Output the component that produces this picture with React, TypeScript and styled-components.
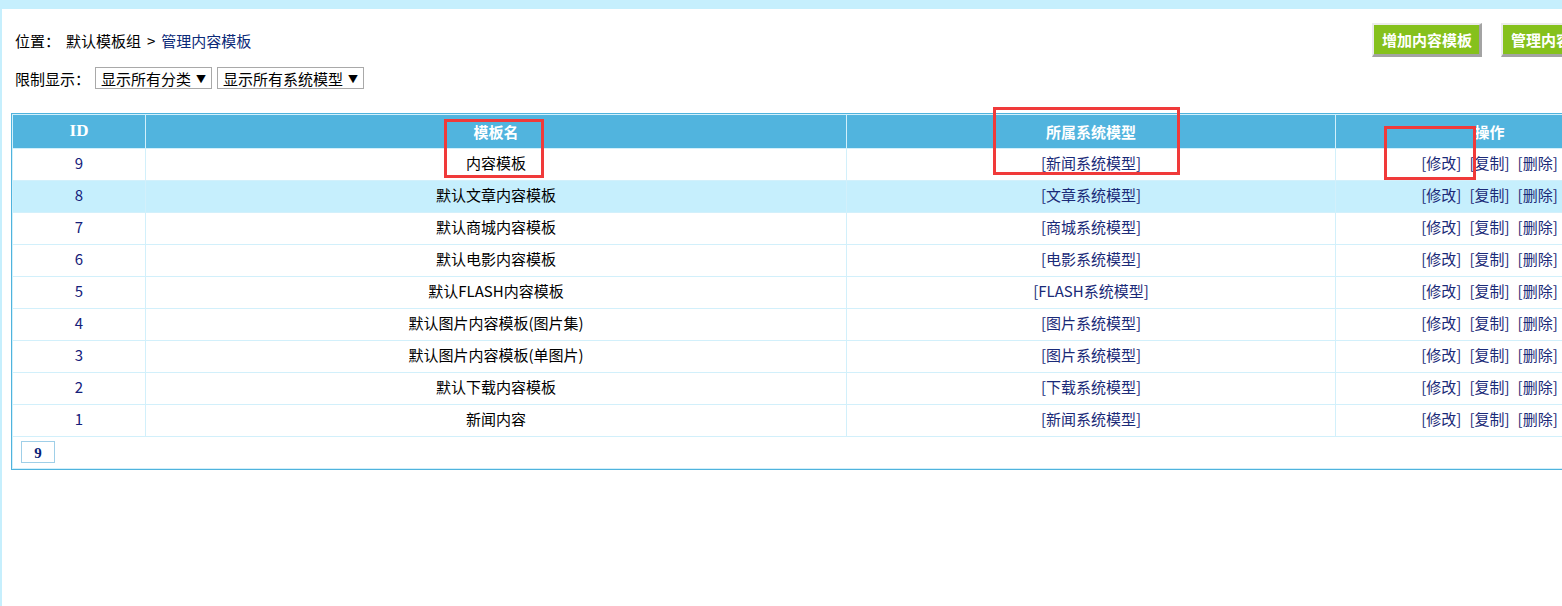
import React from 'react';
import styled, { createGlobalStyle } from 'styled-components';

const GlobalStyle = createGlobalStyle`
    html, body {
        margin: 0;
        padding: 0;
        overflow: hidden;
        background: #c6effd;
    }
    body {
        font-family: "Noto Sans CJK SC", "Liberation Sans", sans-serif;
        font-size: 15px;
        color: #000;
    }
`;

interface TemplateRow {
    id: number;
    name: string;
    model: string;
}

const rows: TemplateRow[] = [
    { id: 9, name: '内容模板', model: '新闻系统模型' },
    { id: 8, name: '默认文章内容模板', model: '文章系统模型' },
    { id: 7, name: '默认商城内容模板', model: '商城系统模型' },
    { id: 6, name: '默认电影内容模板', model: '电影系统模型' },
    { id: 5, name: '默认FLASH内容模板', model: 'FLASH系统模型' },
    { id: 4, name: '默认图片内容模板(图片集)', model: '图片系统模型' },
    { id: 3, name: '默认图片内容模板(单图片)', model: '图片系统模型' },
    { id: 2, name: '默认下载内容模板', model: '下载系统模型' },
    { id: 1, name: '新闻内容', model: '新闻系统模型' },
];

const Frame = styled.div`
    padding: 9px 0 0 2px;
    min-height: 606px;
    box-sizing: border-box;
`;

const Page = styled.div`
    position: relative;
    width: 1660px;
    min-height: 597px;
    background: #fff;
    padding: 14px 0 0 9px;
    box-sizing: border-box;
`;

const TopBar = styled.div`
    display: flex;
    align-items: center;
    justify-content: space-between;
    height: 34px;
    padding-left: 4px;
`;

const Position = styled.div`
    display: flex;
    gap: 6px;
    color: #000;
`;

const PosLink = styled.span`
    color: #0b2a78;
`;

const Buttons = styled.div`
    display: flex;
    gap: 19px;
    padding-right: 51px;
`;

const GreenButton = styled.div`
    height: 34px;
    padding: 0 7px 0 8px;
    display: flex;
    align-items: center;
    box-sizing: border-box;
    background: #85c11c;
    color: #fff;
    font-weight: bold;
    font-size: 15px;
    border-top: 2px solid #ececec;
    border-left: 2px solid #ececec;
    border-right: 3px solid #a3a3a3;
    border-bottom: 3px solid #a3a3a3;
    white-space: nowrap;
`;

const FilterRow = styled.div`
    display: flex;
    align-items: center;
    margin-top: 10px;
    padding-left: 4px;
    height: 22px;
`;

const FilterLabel = styled.span`
    margin-right: 5px;
`;

const Select = styled.div`
    height: 22px;
    box-sizing: border-box;
    border: 1px solid #a9a9a9;
    padding: 0 5px;
    display: flex;
    align-items: center;
    gap: 5px;
    margin-right: 5px;
    font-size: 15px;
    color: #000;
    &::after {
        content: '▼';
        font-size: 10px;
    }
`;

const Table = styled.table`
    margin-top: 24px;
    width: 1634px;
    border: 1px solid #4fb3dd;
    border-spacing: 1px;
    background: #d2f0fb;
    table-layout: fixed;
`;

const HeadCell = styled.th<{ $latin?: boolean }>`
    height: 32px;
    padding: 0 0 1px;
    background: #51b4de;
    color: #fff;
    font-weight: bold;
    font-size: ${({ $latin }) => ($latin ? '17px' : '15px')};
    font-family: "Liberation Serif", "Noto Sans CJK SC", serif;
    text-align: center;
`;

const Row = styled.tr<{ $active?: boolean }>`
    td {
        background: ${({ $active }) => ($active ? '#c6effd' : '#fff')};
    }
`;

const Cell = styled.td<{ $tone?: 'id' | 'link' }>`
    height: 31px;
    padding: 0 0 4px;
    box-sizing: border-box;
    text-align: center;
    font-size: 15px;
    color: ${({ $tone }) => ($tone === 'id' ? '#14207a' : $tone === 'link' ? '#1a2a78' : '#000')};
`;

const ActionLink = styled.span`
    color: #1a2a78;
    margin: 0 4px;
`;

const FootCell = styled.td`
    height: 30px;
    padding: 0 0 1px 8px;
    background: #fff;
`;

const PageNum = styled.span`
    display: inline-block;
    width: 34px;
    height: 22px;
    line-height: 22px;
    box-sizing: border-box;
    border: 1px solid #9fcfe8;
    text-align: center;
    font-family: "Liberation Serif", serif;
    font-weight: bold;
    font-size: 15px;
    color: #0a1f78;
`;

const Mark = styled.div`
    position: absolute;
    border: 3px solid #f03a3a;
    box-sizing: border-box;
    pointer-events: none;
`;

const marks = [
    { left: 442, top: 110, width: 100, height: 59 },
    { left: 991, top: 98, width: 187, height: 68 },
    { left: 1382, top: 117, width: 92, height: 54 },
];

const App: React.FC = () => {
    return (
        <Frame>
            <GlobalStyle />
            <Page>
                <TopBar>
                    <Position>
                        <span>位置：</span>
                        <span>默认模板组</span>
                        <span>&gt;</span>
                        <PosLink>管理内容模板</PosLink>
                    </Position>
                    <Buttons>
                        <GreenButton>增加内容模板</GreenButton>
                        <GreenButton>管理内容模板</GreenButton>
                    </Buttons>
                </TopBar>
                <FilterRow>
                    <FilterLabel>限制显示：</FilterLabel>
                    <Select>显示所有分类</Select>
                    <Select>显示所有系统模型</Select>
                </FilterRow>
                <Table>
                    <colgroup>
                        <col style={{ width: 132 }} />
                        <col style={{ width: 700 }} />
                        <col style={{ width: 488 }} />
                        <col />
                    </colgroup>
                    <thead>
                        <tr>
                            <HeadCell $latin>ID</HeadCell>
                            <HeadCell>模板名</HeadCell>
                            <HeadCell>所属系统模型</HeadCell>
                            <HeadCell>操作</HeadCell>
                        </tr>
                    </thead>
                    <tbody>
                        {rows.map((row) => (
                            <Row key={row.id} $active={row.id === 8}>
                                <Cell $tone="id">{row.id}</Cell>
                                <Cell>{row.name}</Cell>
                                <Cell $tone="link">[{row.model}]</Cell>
                                <Cell>
                                    <ActionLink>[修改]</ActionLink>
                                    <ActionLink>[复制]</ActionLink>
                                    <ActionLink>[删除]</ActionLink>
                                </Cell>
                            </Row>
                        ))}
                        <tr>
                            <FootCell colSpan={4}>
                                <PageNum>9</PageNum>
                            </FootCell>
                        </tr>
                    </tbody>
                </Table>
                {marks.map((m, i) => (
                    <Mark key={i} style={{ left: m.left, top: m.top, width: m.width, height: m.height }} />
                ))}
            </Page>
        </Frame>
    );
};

export default App;
